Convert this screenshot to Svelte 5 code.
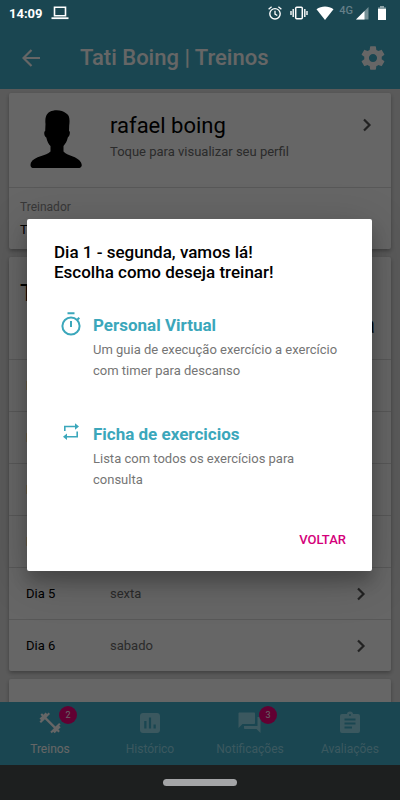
<script lang="ts">
	interface Tab {
		label: string;
		icon: string;
		badge?: number;
	}

	const days = ['segunda', 'terça', 'quarta', 'quinta', 'sexta', 'sabado'];

	const tabs: Tab[] = [
		{
			label: 'Treinos',
			badge: 2,
			icon: 'M21.100 14.800l1.500-1.400-1.500-1.500-3.600 3.700L8.500 6.600 12 3.100 10.600 1.600 9.100 3.100 7.600 1.600 5.500 3.800 4 2.300 2.500 3.800 4 5.300 1.500 7.600 3 9.100 1.500 10.600 3 12.100 6.900 8.200l9 9-3.600 3.600 1.500 1.500 1.400-1.500 1.500 1.500 2.200-2.200 1.500 1.500 1.500-1.500-1.500-1.500 2.300-2.300z'
		},
		{
			label: 'Histórico',
			icon: 'M19 2H5C3.300 2 2 3.300 2 5v14c0 1.700 1.300 3 3 3h14c1.700 0 3-1.300 3-3V5c0-1.700-1.300-3-3-3zM8.500 17.500H6.200V10h2.300zm4.600 0h-2.200v-11h2.200zm4.700 0h-2.300v-4h2.300z'
		},
		{
			label: 'Notificações',
			badge: 3,
			icon: 'M21.500 6h-2v9H6v2c0 .55.45 1 1 1h11.500l4 4V7c0-.55-.45-1-1-1zM17 12V2.500c0-.55-.45-1-1-1H1.500c-.55 0-1 .45-1 1V17l4-4H16c.55 0 1-.45 1-1z'
		},
		{
			label: 'Avaliações',
			icon: 'M20 3h-4.800a3.300 3.300 0 0 0-6.400 0H4a2 2 0 0 0-2 2v15a2 2 0 0 0 2 2h16a2 2 0 0 0 2-2V5a2 2 0 0 0-2-2zm-8 0a1 1 0 1 1 0 2 1 1 0 0 1 0-2zm2 14.500H6.500v-2H14zm3.500-4h-11v-2h11zm0-4h-11v-2h11z'
		}
	];

	let active = $state('Treinos');
	let open = $state(true);
</script>

{#snippet chevron()}
	<svg class="chevron" viewBox="0 0 10 14" aria-hidden="true">
		<path d="M2 1.500L7.500 7 2 12.500" fill="none" stroke="currentColor" stroke-width="2.200" />
	</svg>
{/snippet}

<div class="app">
	<div class="status">
		<span class="clock">14:09</span>
		<svg class="laptop" viewBox="0 0 18 14" fill="none" stroke="currentColor" aria-hidden="true">
			<path d="M3.500 1.200h11v8.600h-11z" stroke-width="1.600" />
			<path d="M.5 12.200h17" stroke-width="1.800" />
		</svg>
		<div class="indicators">
			<svg width="14" height="14" viewBox="0 0 14 14" fill="none" stroke="currentColor" aria-hidden="true">
				<circle cx="7" cy="7.800" r="5.200" stroke-width="1.400" />
				<path d="M7 4.700v3.400l2.300 1.400M.6 3.300L3.600.8M13.400 3.300L10.400.8" stroke-width="1.300" />
			</svg>
			<svg width="18" height="14" viewBox="0 0 18 14" fill="none" stroke="currentColor" aria-hidden="true">
				<rect x="5.700" y="1.200" width="6.600" height="11.600" rx="1" stroke-width="1.500" />
				<path d="M3.200 3v8M14.800 3v8M1 5v4M17 5v4" stroke-width="1.400" />
			</svg>
			<svg width="18" height="14" viewBox="0 0 18 14" fill="currentColor" aria-hidden="true">
				<path d="M9 14L.5 3.300C5.500-.5 12.500-.5 17.500 3.300z" />
			</svg>
			<span class="network">4G</span>
			<svg width="14" height="14" viewBox="0 0 14 14" fill="currentColor" aria-hidden="true">
				<path d="M13.500 1v12.500H1z" opacity=".4" />
				<path d="M9.500 5v8.500H1z" />
			</svg>
			<svg width="10" height="14" viewBox="0 0 10 14" fill="currentColor" aria-hidden="true">
				<path d="M3 0h4v1.500h2V4H1V1.500h2z" opacity=".5" />
				<path d="M1 3h8v11H1z" />
			</svg>
		</div>
	</div>

	<header>
		<button class="icon-button" aria-label="Voltar para a tela anterior">
			<svg width="18" height="18" viewBox="0 0 18 18" fill="none" stroke="currentColor" stroke-width="2.200">
				<path d="M18 9H2M9.500 1L1.500 9l8 8" />
			</svg>
		</button>
		<h1>Tati Boing | Treinos</h1>
		<button class="icon-button" aria-label="Configurações">
			<svg width="28" height="28" viewBox="0 0 24 24" fill="currentColor">
				<path
					d="M19.430 12.980c.04-.32.07-.64.07-.98s-.03-.66-.07-.98l2.110-1.650c.19-.15.24-.42.12-.64l-2-3.460c-.12-.22-.39-.3-.61-.22l-2.490 1c-.52-.4-1.080-.73-1.690-.98l-.38-2.650C14.460 2.180 14.250 2 14 2h-4c-.25 0-.46.18-.49.42l-.38 2.650c-.61.25-1.170.59-1.690.98l-2.490-1c-.23-.09-.49 0-.61.22l-2 3.460c-.13.22-.07.49.12.64l2.110 1.650c-.04.32-.07.65-.07.98s.03.66.07.98l-2.110 1.650c-.19.15-.24.42-.12.64l2 3.460c.12.22.39.3.61.22l2.490-1c.52.4 1.080.73 1.690.98l.38 2.650c.03.24.24.42.49.42h4c.25 0 .46-.18.49-.42l.38-2.650c.61-.25 1.170-.59 1.690-.98l2.490 1c.23.09.49 0 .61-.22l2-3.460c.12-.22.07-.49-.12-.64l-2.110-1.650zM12 15.500c-1.930 0-3.500-1.570-3.500-3.500s1.570-3.500 3.500-3.500 3.500 1.570 3.500 3.500-1.570 3.500-3.500 3.500z"
				/>
			</svg>
		</button>
	</header>

	<main>
		<section class="card">
			<a class="profile" href="#perfil">
				<svg class="avatar" viewBox="0 0 52 58" aria-hidden="true">
					<path
						d="M15.500 14C14.500 5 18 1.500 23 .7c5-1.200 10 .2 13 2.600 3.500 1.500 4 6 3.200 12.200L39 21c1.500 0 1 5-1.200 6.500-.8 3.800-2.500 6.500-4.300 8.500v5.500c3.500 4.500 14 4.500 17.500 11 1.200 2.500 1.200 4.500-1.500 5.500h-47C.2 57 .2 55 1 52.500 4.500 46 16.500 46 20.500 41.500V36c-2-2-3.300-4.500-4.200-8.500C14 26.500 13.600 21.500 15.200 21z"
					/>
				</svg>
				<div class="profile-text">
					<h2>rafael boing</h2>
					<p>Toque para visualizar seu perfil</p>
				</div>
				{@render chevron()}
			</a>
			<div class="trainer">
				<span class="caption">Treinador</span>
				<span>Tati Boing</span>
			</div>
		</section>

		<section class="card">
			<div class="plan">
				<h2>Treinos</h2>
				<h2 class="plan-end">da semana</h2>
			</div>
			{#each days as day, i}
				<button class="day" onclick={() => (open = true)}>
					<span class="day-name">Dia {i + 1}</span>
					<span class="weekday">{day}</span>
					{@render chevron()}
				</button>
			{/each}
		</section>

		<section class="card next"></section>
	</main>

	<nav>
		{#each tabs as tab}
			<button class="tab" class:active={tab.label === active} onclick={() => (active = tab.label)}>
				<span class="tab-icon">
					<svg width="24" height="24" viewBox="0 0 24 24" fill="currentColor" fill-rule="evenodd" aria-hidden="true">
						<path d={tab.icon} />
					</svg>
					{#if tab.badge}
						<span class="badge">{tab.badge}</span>
					{/if}
				</span>
				<span class="tab-label">{tab.label}</span>
			</button>
		{/each}
	</nav>

	<div class="system-nav"><span class="handle"></span></div>

	{#if open}
		<div class="scrim">
			<div class="dialog" role="dialog" aria-modal="true" aria-labelledby="dialog-title">
				<h3 id="dialog-title">Dia 1 - segunda, vamos lá!<br />Escolha como deseja treinar!</h3>
				<button class="option">
					<svg width="22" height="24" viewBox="0 0 22 24" fill="none" stroke="currentColor" stroke-width="2" aria-hidden="true">
						<circle cx="11" cy="14" r="8.600" />
						<path d="M7.500 1.200h7M11 9v6M17.300 7.800l2-2" />
					</svg>
					<span class="option-text">
						<strong>Personal Virtual</strong>
						<span>Um guia de execução exercício a exercício com timer para descanso</span>
					</span>
				</button>
				<button class="option">
					<svg width="22" height="24" viewBox="0 0 22 24" fill="none" stroke="currentColor" stroke-width="1.600" aria-hidden="true">
						<path d="M4.800 10V5.500H17M17.200 10.500v5.200H5" />
						<path d="M15 2.300l4 3.200-4 3.200zM7 12.500l-4 3.200 4 3.200z" fill="currentColor" stroke="none" />
					</svg>
					<span class="option-text">
						<strong>Ficha de exercicios</strong>
						<span>Lista com todos os exercícios para consulta</span>
					</span>
				</button>
				<div class="actions">
					<button class="back" onclick={() => (open = false)}>VOLTAR</button>
				</div>
			</div>
		</div>
	{/if}
</div>

<style>
	:global(body) {
		margin: 0;
	}

	.app {
		position: relative;
		display: flex;
		flex-direction: column;
		height: 100vh;
		overflow: hidden;
		background: #e2e2e2;
		color: #000;
		font-family: Roboto, 'Liberation Sans', sans-serif;
		font-size: 13px;
	}

	h1,
	h2,
	h3,
	p {
		margin: 0;
	}

	button {
		padding: 0;
		border: 0;
		background: none;
		color: inherit;
		font: inherit;
		text-align: left;
		cursor: pointer;
	}

	svg {
		flex: none;
		display: block;
	}

	/* Status bar, its symbols stay bright above the scrim */
	.status {
		display: flex;
		align-items: center;
		box-sizing: border-box;
		height: 26px;
		padding: 0 13px 0 9px;
		background: #41afca;
	}

	.status > * {
		position: relative;
		z-index: 3;
		color: #fff;
	}

	.clock {
		font-weight: 700;
	}

	.laptop {
		width: 18px;
		height: 14px;
		margin-left: 8px;
	}

	.indicators {
		display: flex;
		align-items: center;
		gap: 8px;
		margin-left: auto;
	}

	.indicators .network {
		margin: -6px -6px 0 -3px;
		font-size: 11px;
		font-weight: 500;
		color: #647f88;
	}

	header {
		display: flex;
		align-items: center;
		flex: none;
		height: 63px;
		padding: 0 13px 0 22px;
		background: #41afca;
		color: #fff;
	}

	header h1 {
		flex: 1;
		margin-left: 40px;
		font-size: 22px;
		font-weight: 500;
	}

	main {
		flex: 1;
		min-height: 0;
		padding: 4px 9px 0;
		overflow: hidden;
	}

	.card {
		margin-bottom: 8px;
		background: #fff;
		border-radius: 2px;
		box-shadow: 0 2px 4px rgba(0, 0, 0, 0.3);
	}

	.card h2 {
		font-size: 22px;
		font-weight: 400;
		line-height: 32px;
	}

	.profile {
		display: flex;
		box-sizing: border-box;
		height: 95px;
		padding: 17px 19px 0 21px;
		border-bottom: 1px solid #dcdcdc;
		color: inherit;
		text-decoration: none;
	}

	.avatar {
		width: 52px;
		height: 58px;
	}

	.profile-text {
		flex: 1;
		margin-left: 28px;
	}

	.profile-text p {
		line-height: 20px;
		color: #6c6c6c;
	}

	.chevron {
		width: 10px;
		height: 14px;
		color: #555;
	}

	.profile .chevron {
		margin-top: 8px;
	}

	.trainer {
		display: flex;
		flex-direction: column;
		gap: 8px;
		box-sizing: border-box;
		height: 61px;
		padding: 12px 11px;
	}

	.caption {
		font-size: 12px;
		color: #8c8c8c;
	}

	.plan {
		box-sizing: border-box;
		height: 102px;
		padding: 20px 16px 0 11px;
	}

	.plan h2 {
		font-size: 24px;
	}

	.plan-end {
		text-align: right;
	}

	.day {
		display: flex;
		align-items: center;
		box-sizing: border-box;
		width: 100%;
		height: 52px;
		padding: 0 25px 0 17px;
		border-top: 1px solid #dcdcdc;
	}

	.day-name {
		width: 84px;
	}

	.weekday {
		flex: 1;
		color: #6c6c6c;
	}

	.next {
		height: 80px;
	}

	nav {
		display: flex;
		flex: none;
		height: 63px;
		background: #41afca;
		color: #fff;
	}

	.tab {
		display: flex;
		flex: 1;
		flex-direction: column;
		align-items: center;
		padding-top: 9px;
		color: #94dced;
	}

	.tab.active {
		color: #fff;
	}

	.tab-icon {
		position: relative;
	}

	.badge {
		position: absolute;
		top: -5px;
		left: 21px;
		width: 18px;
		border-radius: 9px;
		background: #f5007e;
		color: #fff;
		font-size: 9px;
		line-height: 18px;
		text-align: center;
	}

	.tab-label {
		margin-top: 6px;
		font-size: 12px;
		line-height: 16px;
	}

	.system-nav {
		display: flex;
		align-items: center;
		justify-content: center;
		position: relative;
		z-index: 3;
		flex: none;
		height: 35px;
		background: #1d1f1f;
	}

	.handle {
		width: 74px;
		height: 7px;
		border-radius: 4px;
		background: #a4a5a7;
	}

	/* Dialog */
	.scrim {
		position: absolute;
		inset: 0;
		z-index: 2;
		display: flex;
		align-items: center;
		justify-content: center;
		padding: 25px 28px 35px 27px;
		background: rgba(0, 0, 0, 0.6);
	}

	.dialog {
		flex: 1;
		max-width: 480px;
		padding: 23px 24px 17px 27px;
		border-radius: 2px;
		background: #fff;
		box-shadow:
			0 11px 15px rgba(0, 0, 0, 0.2),
			0 9px 46px rgba(0, 0, 0, 0.2);
	}

	.dialog h3 {
		margin-bottom: 32px;
		font-size: 17px;
		font-weight: 500;
		line-height: 20px;
	}

	.option {
		display: flex;
		gap: 11px;
		width: 100%;
		padding: 0 6px;
		color: #3ba7bb;
	}

	.option + .option {
		margin-top: 42px;
	}

	.option svg {
		margin-top: -2px;
	}

	.option-text {
		display: flex;
		flex-direction: column;
		gap: 3px;
		color: #757575;
		line-height: 21px;
	}

	.option strong {
		font-size: 17px;
		font-weight: 700;
		line-height: 22px;
		color: #3ba7bb;
	}

	.actions {
		display: flex;
		justify-content: flex-end;
		margin-top: 36px;
	}

	.back {
		padding: 4px 2px;
		font-weight: 500;
		line-height: 20px;
		color: #d4007a;
	}
</style>
